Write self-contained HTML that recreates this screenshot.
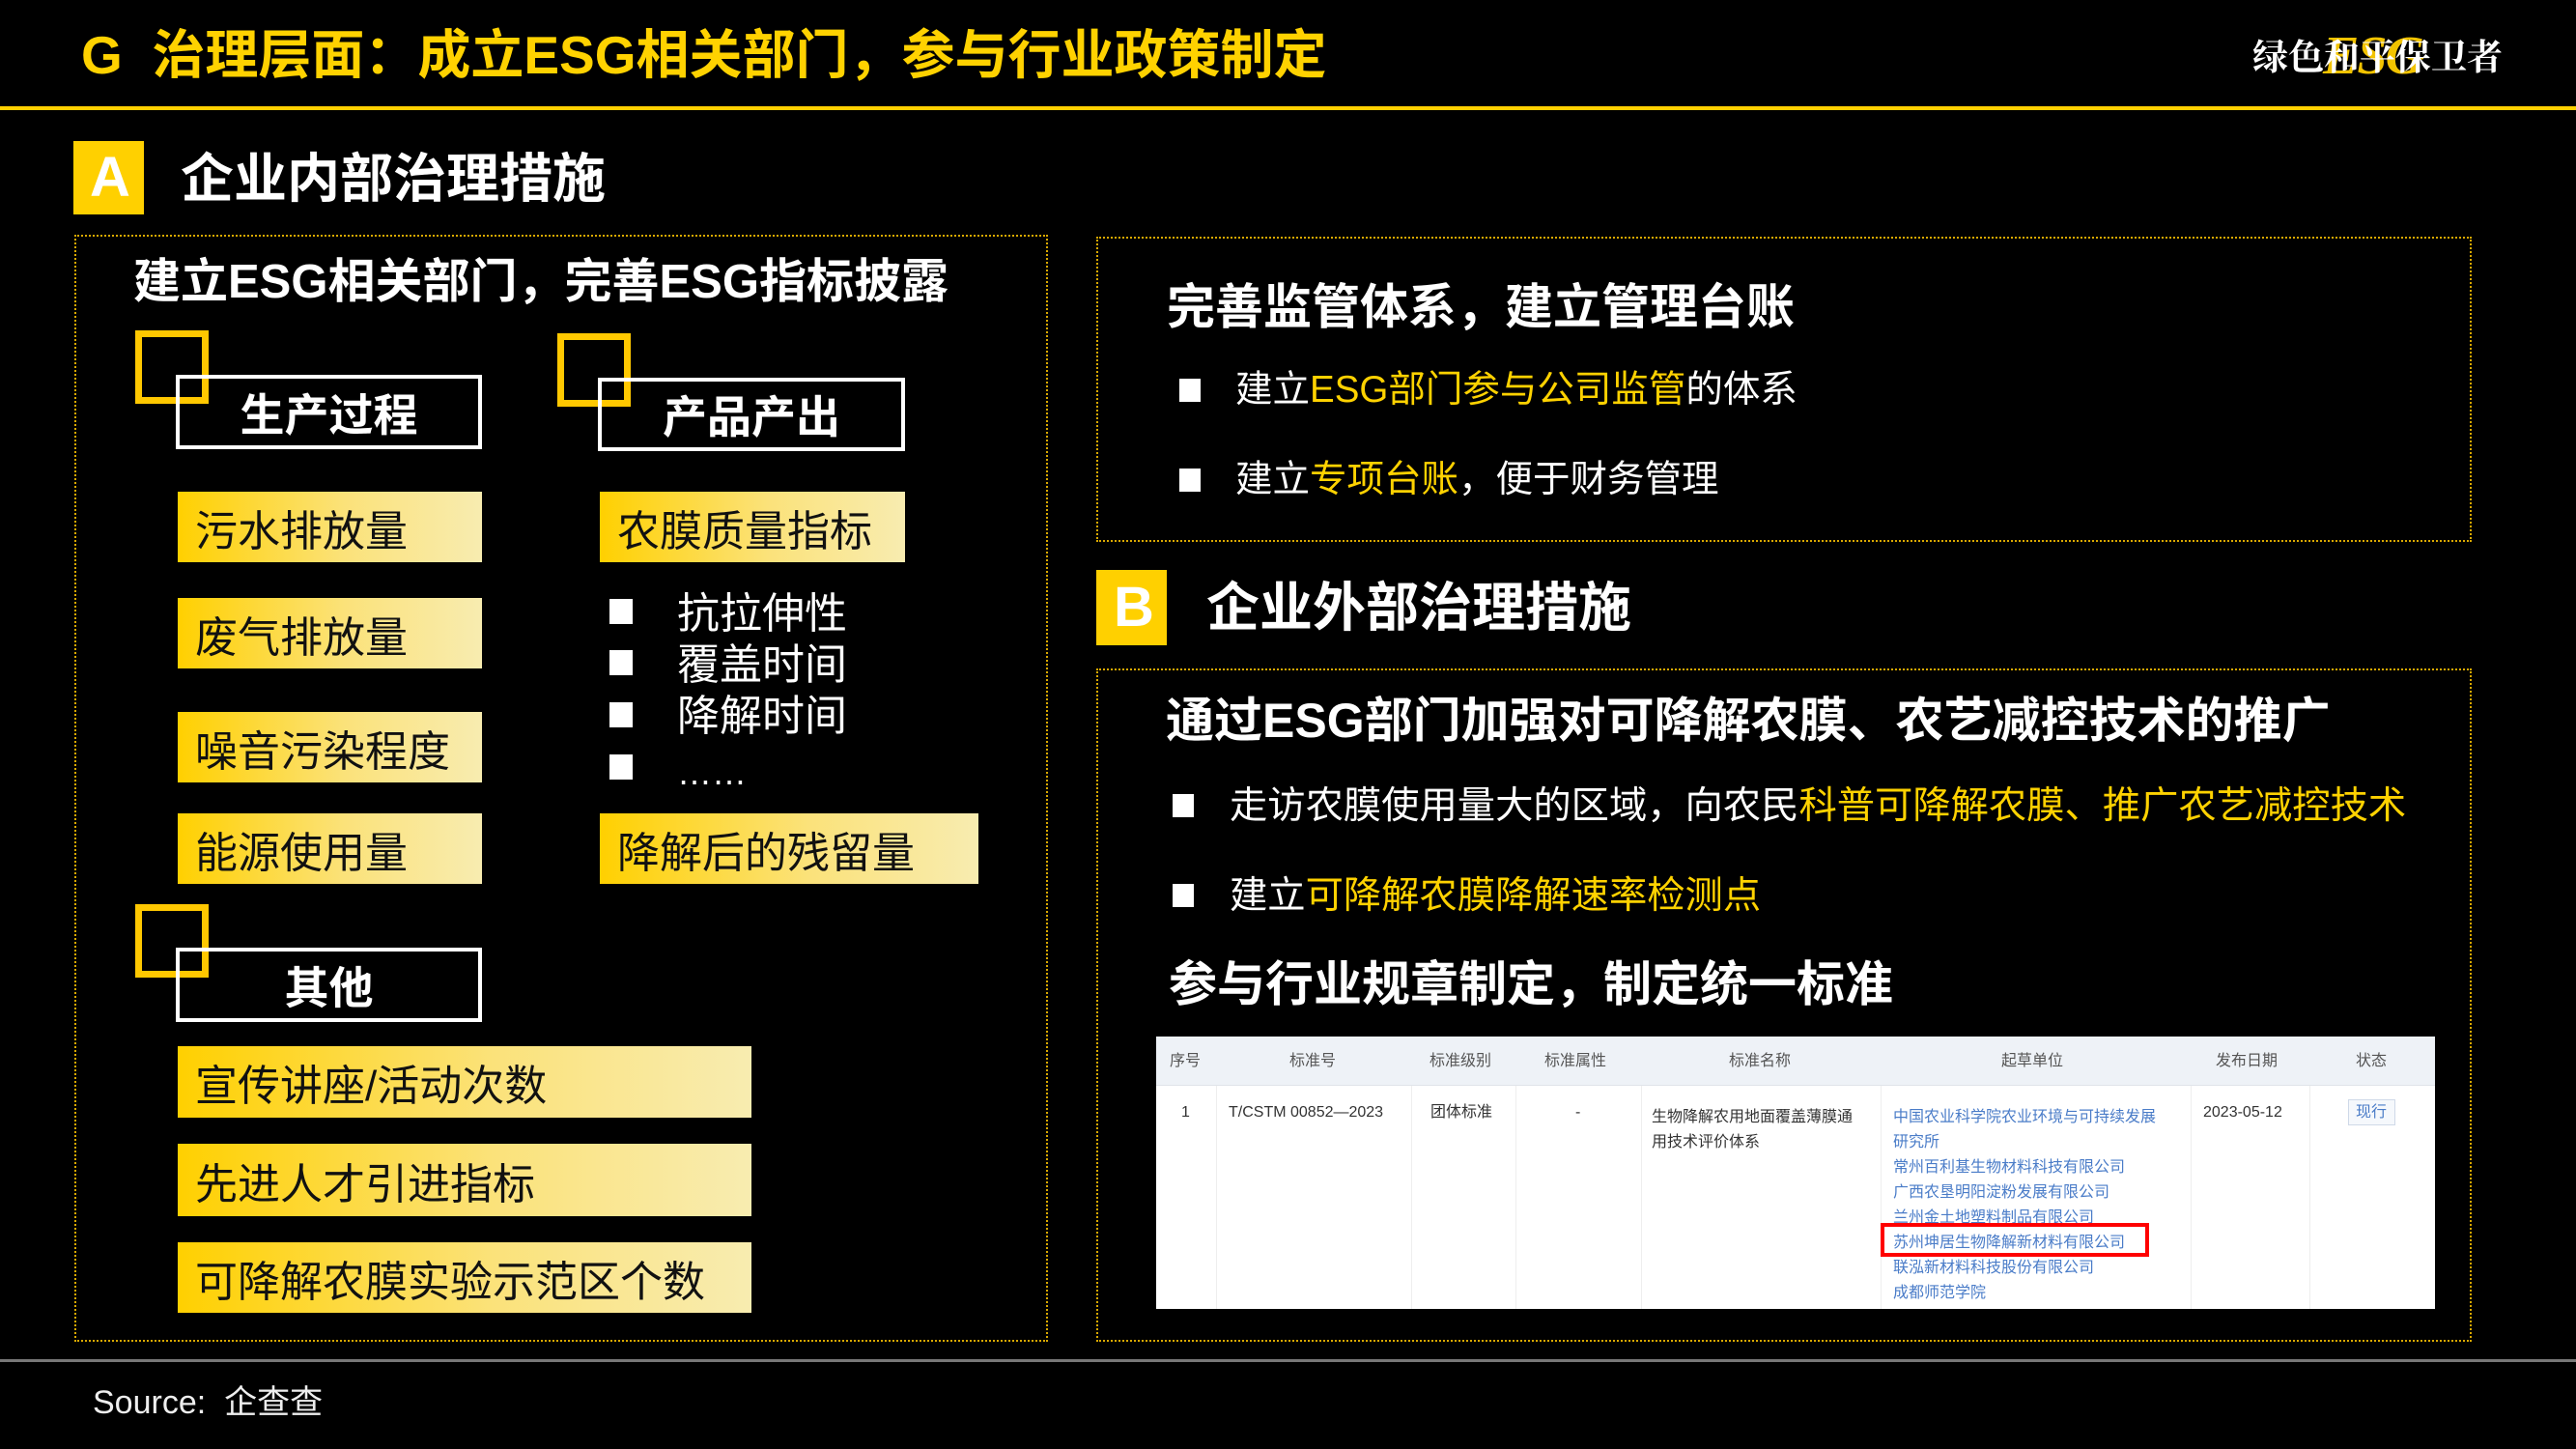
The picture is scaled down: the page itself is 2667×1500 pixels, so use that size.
<!DOCTYPE html>
<html><head><meta charset="utf-8">
<style>
*{margin:0;padding:0;box-sizing:border-box}
body{width:2667px;height:1500px;background:#000;position:relative;overflow:hidden;font-family:"Liberation Sans","Noto Sans CJK SC",sans-serif;color:#fff}
.a{position:absolute;white-space:nowrap;line-height:1}
.b{font-weight:bold}
.y{color:#FFD200}
.dash{position:absolute;border:2px dotted #D9A800}
.sq{position:absolute;border:7px solid #FFC800}
.wb{position:absolute;border:4px solid #fff;display:flex;align-items:center;justify-content:center;font-weight:bold;font-size:46px;color:#fff}
.g{position:absolute;background:linear-gradient(90deg,#FFD000 0%,#FBE27A 55%,#F8ECB0 100%);color:#111;font-size:44px;display:flex;align-items:center;padding-left:18px;white-space:nowrap}
.bl{position:absolute;width:24px;height:26px;background:#fff}
.tb{position:absolute;font-size:16px;color:#555;white-space:nowrap;line-height:1}
.org{color:#4a7cc8}
</style></head><body>

<div class="a b y" style="left:84px;top:30px;font-size:55px;">G&nbsp; 治理层面：成立ESG相关部门，参与行业政策制定</div>
<div style="position:absolute;left:0;top:110px;width:2667px;height:4px;background:#FFD000"></div>

<!-- logo -->
<div class="a" style="left:2405px;top:30px;font-size:56px;font-style:italic;font-weight:bold;color:#F2C300;font-family:'Liberation Serif',serif;letter-spacing:-2px">ESG</div>
<div class="a" style="left:2332px;top:38px;font-size:37px;color:#fff;font-weight:bold;font-family:'Noto Serif CJK SC',serif;letter-spacing:0px">绿色和平保卫者</div>

<!-- A -->
<div style="position:absolute;left:76px;top:146px;width:73px;height:76px;background:#FFD000"></div>
<div class="a b" style="left:93px;top:155px;font-size:58px;color:#fff">A</div>
<div class="a b" style="left:187px;top:158px;font-size:55px">企业内部治理措施</div>

<div class="dash" style="left:77px;top:243px;width:1008px;height:1146px"></div>
<div class="a b" style="left:138px;top:268px;font-size:49px">建立ESG相关部门，完善ESG指标披露</div>

<div class="sq" style="left:140px;top:342px;width:76px;height:76px"></div>
<div class="wb" style="left:182px;top:388px;width:317px;height:77px">生产过程</div>
<div class="sq" style="left:577px;top:345px;width:76px;height:76px"></div>
<div class="wb" style="left:619px;top:391px;width:318px;height:76px">产品产出</div>
<div class="sq" style="left:140px;top:936px;width:76px;height:76px"></div>
<div class="wb" style="left:182px;top:981px;width:317px;height:77px">其他</div>

<div class="g" style="left:184px;top:509px;width:315px;height:73px">污水排放量</div>
<div class="g" style="left:184px;top:619px;width:315px;height:73px">废气排放量</div>
<div class="g" style="left:184px;top:737px;width:315px;height:73px">噪音污染程度</div>
<div class="g" style="left:184px;top:842px;width:315px;height:73px">能源使用量</div>
<div class="g" style="left:621px;top:509px;width:316px;height:73px">农膜质量指标</div>
<div class="g" style="left:621px;top:842px;width:392px;height:73px">降解后的残留量</div>
<div class="g" style="left:184px;top:1083px;width:594px;height:74px">宣传讲座/活动次数</div>
<div class="g" style="left:184px;top:1184px;width:594px;height:75px">先进人才引进指标</div>
<div class="g" style="left:184px;top:1286px;width:594px;height:73px">可降解农膜实验示范区个数</div>

<div class="bl" style="left:631px;top:620px"></div>
<div class="bl" style="left:631px;top:673px"></div>
<div class="bl" style="left:631px;top:727px"></div>
<div class="bl" style="left:631px;top:781px"></div>
<div class="a" style="left:701px;top:614px;font-size:44px">抗拉伸性</div>
<div class="a" style="left:701px;top:667px;font-size:44px">覆盖时间</div>
<div class="a" style="left:701px;top:720px;font-size:44px">降解时间</div>
<div class="a" style="left:701px;top:782px;font-size:36px">……</div>

<!-- right top -->
<div class="dash" style="left:1135px;top:245px;width:1424px;height:316px"></div>
<div class="a b" style="left:1208px;top:293px;font-size:50px">完善监管体系，建立管理台账</div>
<div class="bl" style="left:1221px;top:392px;width:22px;height:24px"></div>
<div class="a" style="left:1279px;top:385px;font-size:38.5px">建立<span class="y">ESG部门参与公司监管</span>的体系</div>
<div class="bl" style="left:1221px;top:485px;width:22px;height:24px"></div>
<div class="a" style="left:1279px;top:478px;font-size:38.5px">建立<span class="y">专项台账</span>，便于财务管理</div>

<!-- B -->
<div style="position:absolute;left:1135px;top:590px;width:73px;height:78px;background:#FFD000"></div>
<div class="a b" style="left:1153px;top:600px;font-size:58px;color:#fff">B</div>
<div class="a b" style="left:1249px;top:602px;font-size:55px">企业外部治理措施</div>

<div class="dash" style="left:1135px;top:692px;width:1424px;height:697px"></div>
<div class="a b" style="left:1207px;top:721px;font-size:50px">通过ESG部门加强对可降解农膜、农艺减控技术的推广</div>
<div class="bl" style="left:1214px;top:822px;width:22px;height:24px"></div>
<div class="a" style="left:1273px;top:815px;font-size:39.3px">走访农膜使用量大的区域，向农民<span class="y">科普可降解农膜、推广农艺减控技术</span></div>
<div class="bl" style="left:1214px;top:915px;width:22px;height:24px"></div>
<div class="a" style="left:1273px;top:908px;font-size:39.3px">建立<span class="y">可降解农膜降解速率检测点</span></div>
<div class="a b" style="left:1210px;top:994px;font-size:50px">参与行业规章制定，制定统一标准</div>

<!-- table -->
<div style="position:absolute;left:1197px;top:1073px;width:1324px;height:282px;background:#fff;overflow:hidden">
 <div style="position:absolute;left:0;top:0;width:100%;height:51px;background:#EEF2F7;border-bottom:1px solid #e0e4ea"></div>
 <div style="position:absolute;left:62px;top:51px;width:1px;height:240px;background:#eee"></div>
 <div style="position:absolute;left:264px;top:51px;width:1px;height:240px;background:#eee"></div>
 <div style="position:absolute;left:372px;top:51px;width:1px;height:240px;background:#eee"></div>
 <div style="position:absolute;left:502px;top:51px;width:1px;height:240px;background:#eee"></div>
 <div style="position:absolute;left:750px;top:51px;width:1px;height:240px;background:#eee"></div>
 <div style="position:absolute;left:1071px;top:51px;width:1px;height:240px;background:#eee"></div>
 <div style="position:absolute;left:1194px;top:51px;width:1px;height:240px;background:#eee"></div>
</div>
<div class="tb" style="left:1211px;top:1091px">序号</div>
<div class="tb" style="left:1335px;top:1091px">标准号</div>
<div class="tb" style="left:1480px;top:1091px">标准级别</div>
<div class="tb" style="left:1599px;top:1091px">标准属性</div>
<div class="tb" style="left:1790px;top:1091px">标准名称</div>
<div class="tb" style="left:2072px;top:1091px">起草单位</div>
<div class="tb" style="left:2294px;top:1091px">发布日期</div>
<div class="tb" style="left:2439px;top:1091px">状态</div>
<div class="tb" style="left:1223px;top:1144px;color:#333">1</div>
<div class="tb" style="left:1272px;top:1144px;color:#333">T/CSTM 00852—2023</div>
<div class="tb" style="left:1481px;top:1144px;color:#333">团体标准</div>
<div class="tb" style="left:1631px;top:1144px;color:#333">-</div>
<div class="tb" style="left:1710px;top:1144px;color:#333;line-height:26px">生物降解农用地面覆盖薄膜通<br>用技术评价体系</div>
<div class="tb org" style="left:1960px;top:1144px;line-height:26px">中国农业科学院农业环境与可持续发展<br>研究所<br>常州百利基生物材料科技有限公司<br>广西农垦明阳淀粉发展有限公司<br>兰州金土地塑料制品有限公司<br>苏州坤居生物降解新材料有限公司<br>联泓新材料科技股份有限公司<br>成都师范学院</div>
<div style="position:absolute;left:1947px;top:1266px;width:278px;height:35px;border:4px solid #f00"></div>
<div class="tb" style="left:2281px;top:1144px;color:#333">2023-05-12</div>
<div style="position:absolute;left:2431px;top:1138px;width:49px;height:27px;border:1px solid #cfd9e8;background:#f5f8fc"></div>
<div class="tb org" style="left:2439px;top:1144px">现行</div>

<!-- footer -->
<div style="position:absolute;left:0;top:1407px;width:2667px;height:3px;background:#777"></div>
<div class="a" style="left:96px;top:1435px;font-size:34px;color:#eee">Source:&nbsp; 企查查</div>
</body></html>
